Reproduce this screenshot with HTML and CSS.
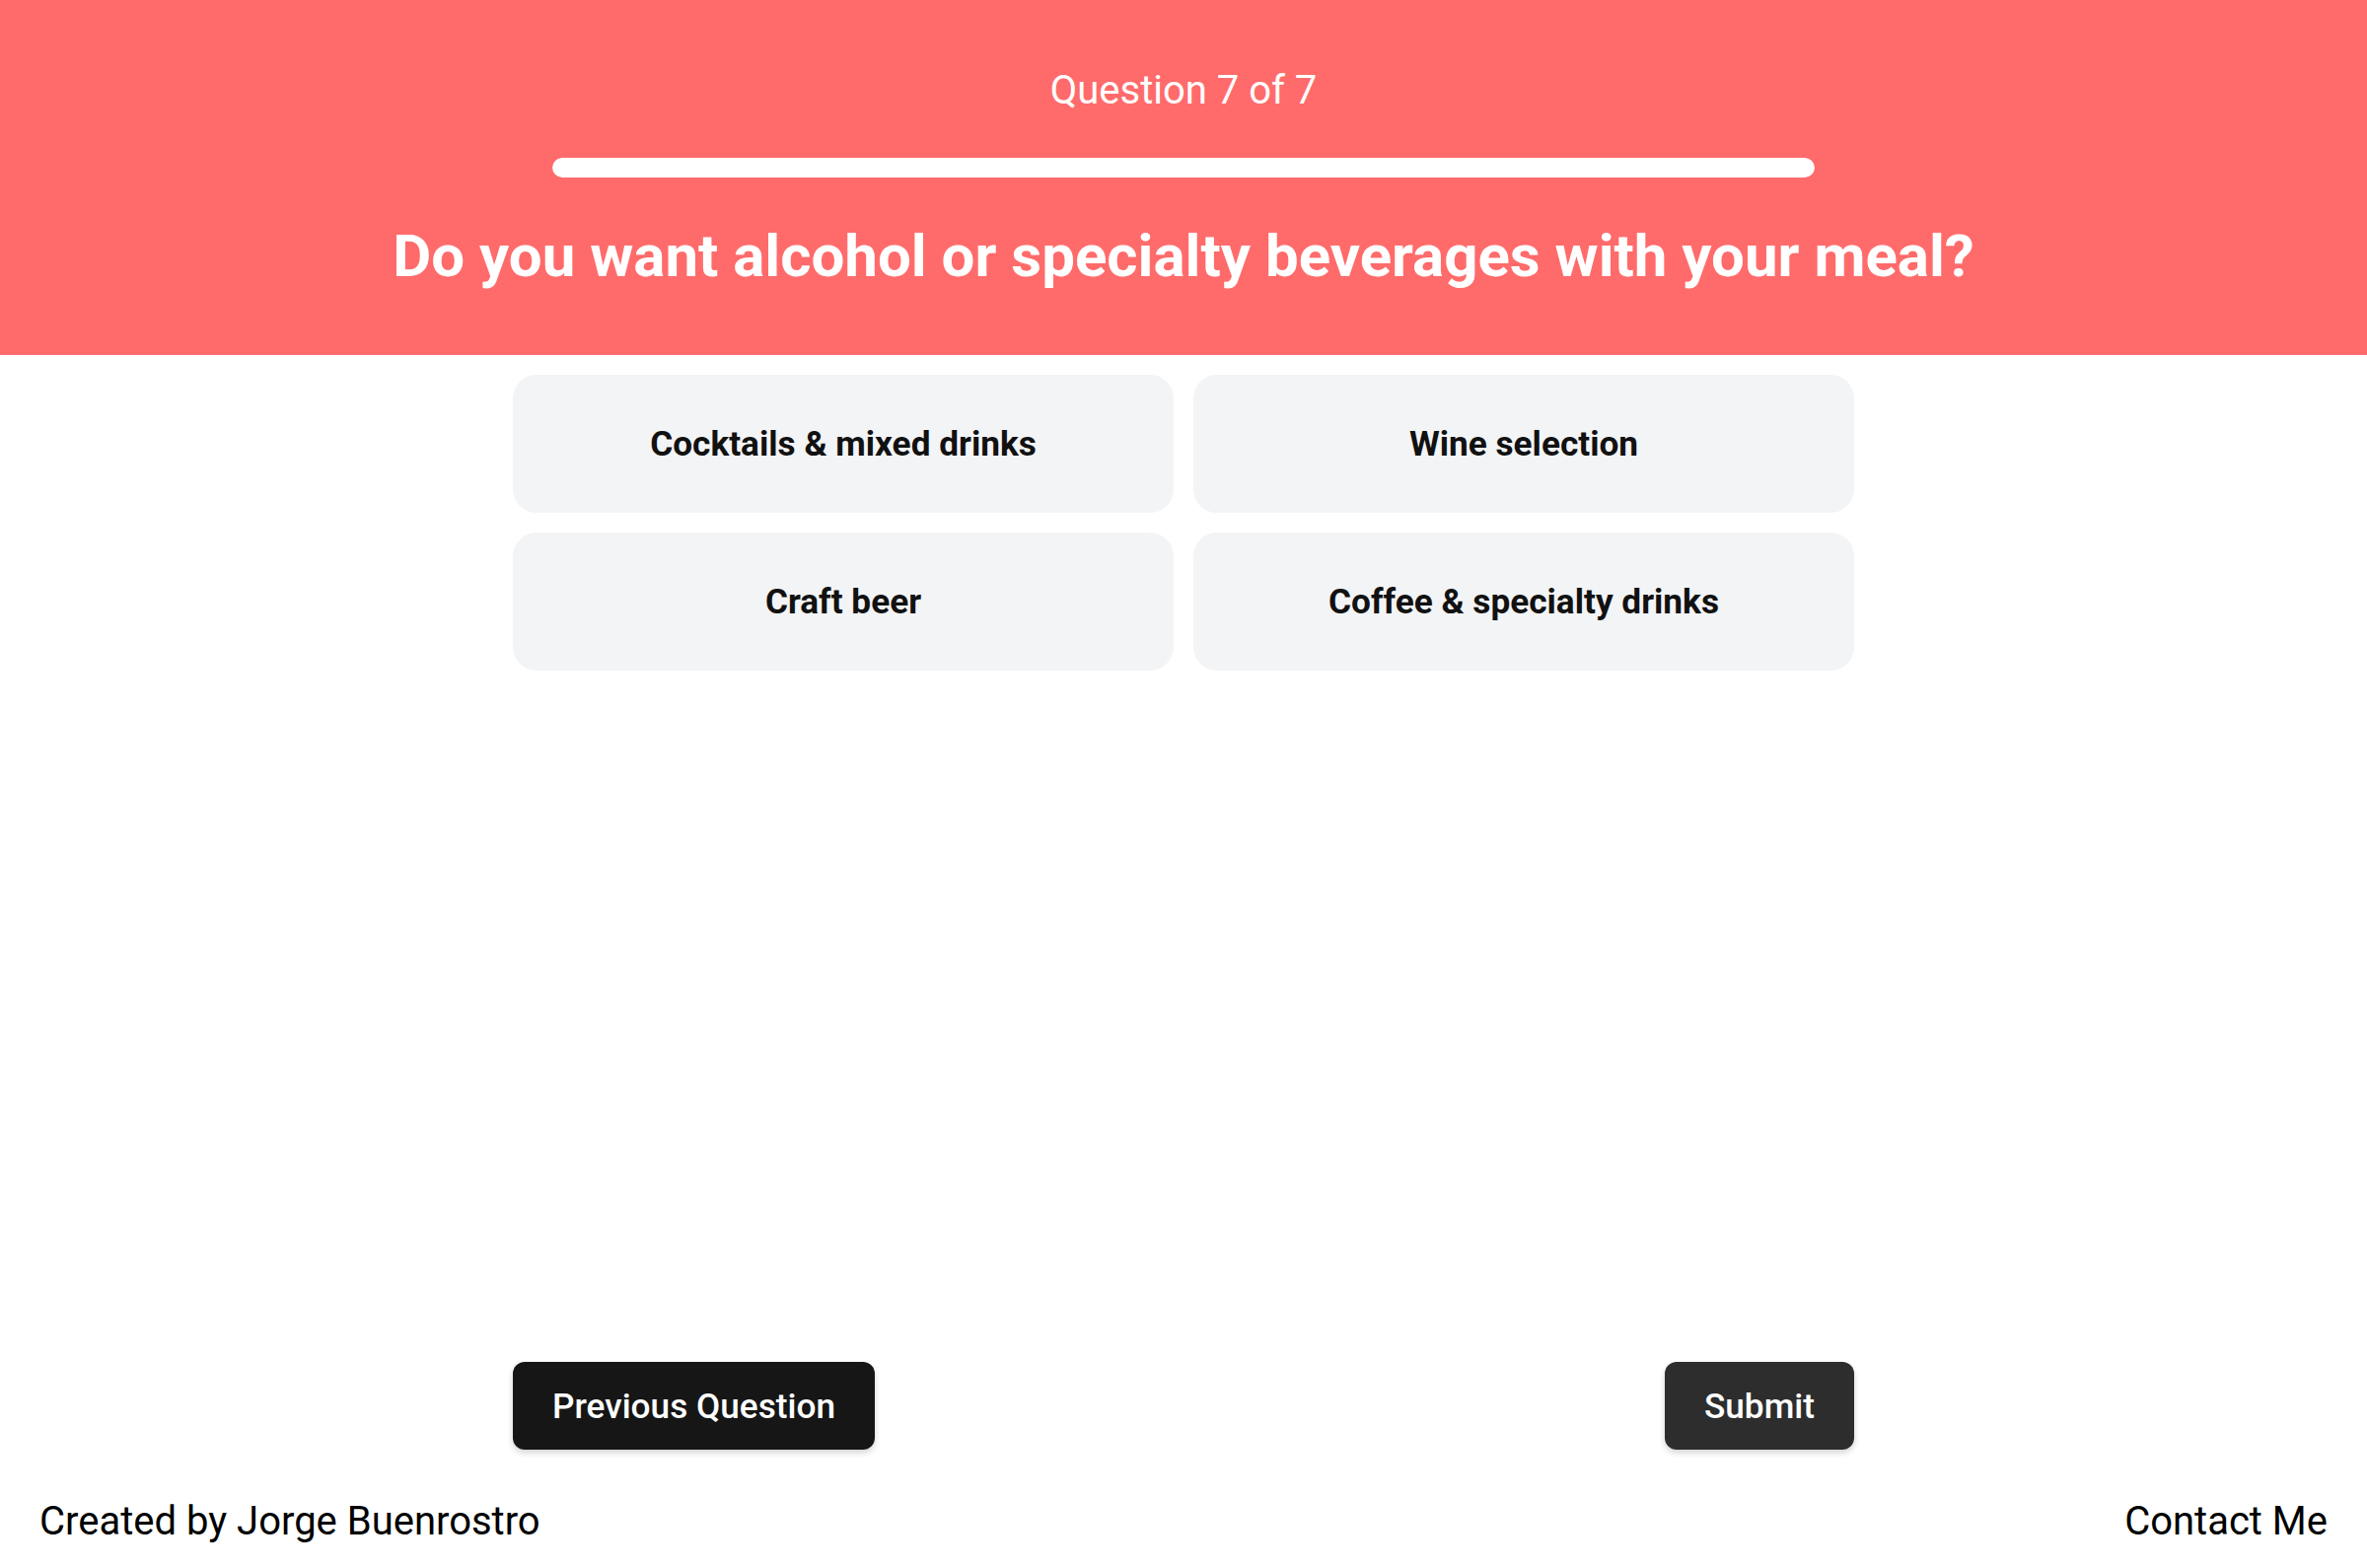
FILE: index.html
```html
<!DOCTYPE html>
<html lang="en">
<head>
<meta charset="utf-8">
<title>Quiz</title>
<link rel="stylesheet" href="styles.css">
</head>
<body>
<div class="page">
  <header class="hero">
    <p class="counter">Question 7 of 7</p>
    <div class="progress"><div class="progress-fill" style="width:100%"></div></div>
    <h1 class="title">Do you want alcohol or specialty beverages with your meal?</h1>
  </header>
  <main class="main">
    <div class="options">
      <button class="option">Cocktails &amp; mixed drinks</button>
      <button class="option">Wine selection</button>
      <button class="option">Craft beer</button>
      <button class="option">Coffee &amp; specialty drinks</button>
    </div>
    <div class="nav">
      <button class="btn btn-prev">Previous Question</button>
      <button class="btn btn-submit">Submit</button>
    </div>
  </main>
  <footer class="footer">
    <span>Created by Jorge Buenrostro</span>
    <span>Contact Me</span>
  </footer>
</div>
</body>
</html>
```
FILE: styles.css
```css
* { box-sizing: border-box; }
html, body { margin: 0; padding: 0; }
body {
  font-family: Roboto, "Liberation Sans", Arial, sans-serif;
  background: #ffffff;
  color: #000;
}
.page {
  display: flex;
  flex-direction: column;
  min-height: 100vh;
}
.hero {
  background: #ff6b6b;
  height: 360px;
  padding-top: 68px;
  display: flex;
  flex-direction: column;
  align-items: center;
  color: #ffffff;
}
.counter {
  margin: 0;
  font-size: 40px;
  line-height: 48px;
  font-weight: 400;
}
.progress {
  width: 1280px;
  height: 20px;
  margin-top: 44px;
  background: rgba(255,255,255,0.35);
  border-radius: 10px;
  overflow: hidden;
}
.progress-fill {
  height: 100%;
  background: #ffffff;
  border-radius: 10px;
}
.title {
  margin: 44px 0 0;
  font-size: 60px;
  line-height: 72px;
  font-weight: 700;
  text-align: center;
}
.main {
  flex: 1;
  display: flex;
  flex-direction: column;
  justify-content: space-between;
  width: 1360px;
  margin: 0 auto;
  padding: 20px 0 20px;
}
.options {
  display: grid;
  grid-template-columns: 1fr 1fr;
  gap: 20px;
}
.option {
  height: 140px;
  border: none;
  border-radius: 24px;
  background: #f3f4f6;
  font-family: inherit;
  font-size: 35.2px;
  font-weight: 700;
  color: #111111;
  cursor: pointer;
}
.nav {
  display: flex;
  justify-content: space-between;
}
.btn {
  height: 89px;
  padding: 0 40px;
  border: none;
  border-radius: 12px;
  font-family: inherit;
  font-size: 35.2px;
  font-weight: 500;
  color: #ffffff;
  box-shadow: 0 3px 6px rgba(0,0,0,0.18);
  cursor: pointer;
}
.btn-prev { background: #161616; }
.btn-submit { background: #2d2d2d; }
.footer {
  display: flex;
  justify-content: space-between;
  padding: 23px 40px 17px;
  font-size: 40px;
  line-height: 60px;
  color: #000;
}
```
